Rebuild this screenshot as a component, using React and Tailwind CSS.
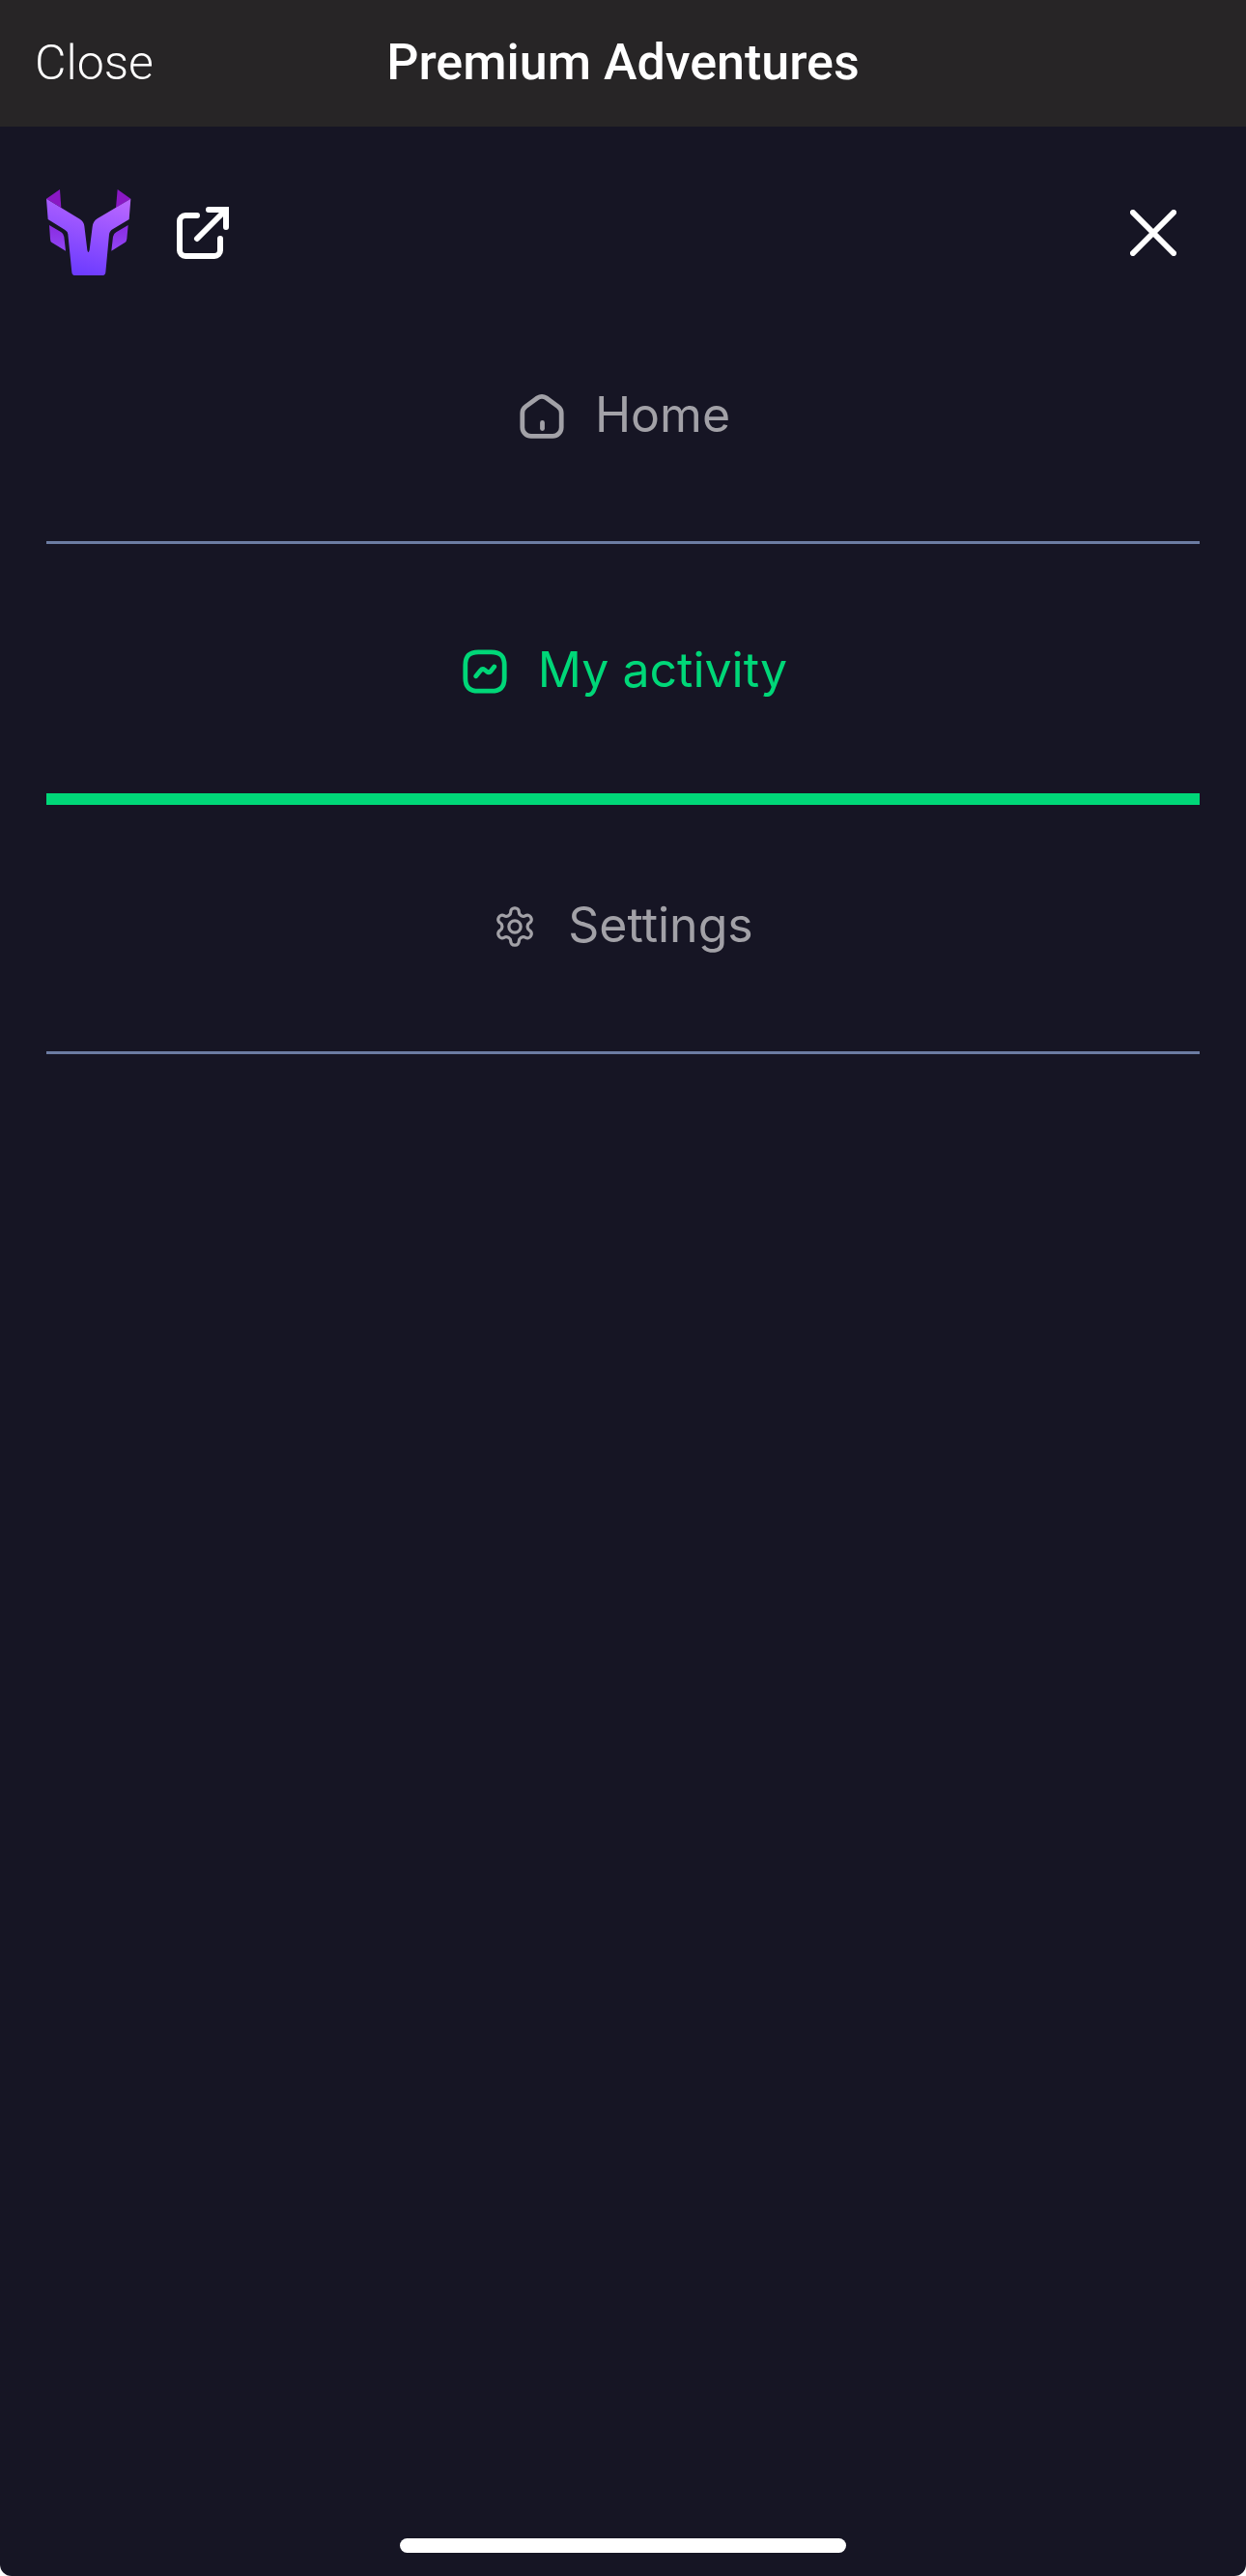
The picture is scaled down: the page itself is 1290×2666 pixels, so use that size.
import React, { useState } from 'react';

function LogoIcon() {
  return (
    <svg viewBox="0 0 264 270" className="w-[88px] h-[90px]" aria-hidden="true">
      <defs>
        <linearGradient id="logo-face" x1="0.7" y1="0" x2="0.4" y2="1">
          <stop offset="0" stopColor="#b765ff" />
          <stop offset="1" stopColor="#6c3bff" />
        </linearGradient>
        <linearGradient id="logo-cheek" x1="0" y1="0" x2="0" y2="1">
          <stop offset="0" stopColor="#8a2be0" />
          <stop offset="1" stopColor="#9146f5" />
        </linearGradient>
      </defs>
      {/* horns */}
      <path d="M0 29 L42 0 L46 57 Z" fill="#8a18c4" />
      <path d="M262 29 L221 0 L216 57 Z" fill="#8a18c4" />
      {/* face */}
      <path
        d="M0 29 L104 92 Q117 100 118 114 L127 188 Q130 202 134 188 L143 116 Q145 99 158 91 L262 29 L257 93 L207 123 Q196 129 195 140 L184 257 Q183 267 173 267 L90 267 Q80 267 79 257 L67 139 Q66 130 57 125 L5 93 Z"
        fill="url(#logo-face)"
      />
      {/* cheeks */}
      <path d="M9 111 L46 133 Q54 138 55 147 L60 191 L17 165 Q12 162 12 154 Z" fill="url(#logo-cheek)" />
      <path d="M254 111 L217 133 Q208 138 207 147 L202 191 L244 165 Q249 162 250 154 Z" fill="url(#logo-cheek)" />
    </svg>
  );
}

function ExternalIcon() {
  return (
    <svg viewBox="0 0 54 54" className="w-[54px] h-[54px]" fill="none" stroke="currentColor" strokeWidth="6" strokeLinecap="round" strokeLinejoin="round" aria-hidden="true">
      <path d="M21 9 H9 A6 6 0 0 0 3 15 V45 A6 6 0 0 0 9 51 H39 A6 6 0 0 0 45 45 V33" />
      <path d="M21 33 L50 4" />
      <path d="M33 3 H51 V21" strokeLinejoin="miter" />
    </svg>
  );
}

function CloseIcon() {
  return (
    <svg viewBox="0 0 50 50" className="w-12 h-12" fill="none" stroke="currentColor" strokeWidth="6" strokeLinecap="round" aria-hidden="true">
      <path d="M3 3 L47 47 M47 3 L3 47" />
    </svg>
  );
}

function HomeIcon() {
  return (
    <svg viewBox="0 0 54 54" className="w-[54px] h-[54px]" fill="none" stroke="currentColor" strokeWidth="4.8" strokeLinecap="round" strokeLinejoin="round" aria-hidden="true">
      <path d="M22.5 7.8 L10.4 16.6 Q6.8 19.3 6.8 23.5 V38.5 A9 9 0 0 0 15.8 47.3 H38.2 A9 9 0 0 0 47.2 38.5 V23.5 Q47.2 19.3 43.6 16.6 L31.5 7.8 Q27 4.9 22.5 7.8 Z" />
      <path d="M27.5 33.5 V39.5" />
    </svg>
  );
}

function ActivityIcon() {
  return (
    <svg viewBox="0 0 54 54" className="w-[54px] h-[54px]" fill="none" stroke="currentColor" strokeWidth="4.8" strokeLinecap="round" strokeLinejoin="round" aria-hidden="true">
      <path d="M20.3 6.8 H33.7 C43 6.8 47.2 11 47.2 20.3 V33.7 C47.2 43 43 47.2 33.7 47.2 H20.3 C11 47.2 6.8 43 6.8 33.7 V20.3 C6.8 11 11 6.8 20.3 6.8 Z" />
      <path d="M17.8 31.8 L22.4 26 Q24.4 23.6 27 25.4 L29 27 Q31.4 28.8 33.4 26.3 L36.7 22" />
    </svg>
  );
}

function SettingsIcon() {
  return (
    <svg viewBox="0 0 24 24" className="w-[46px] h-[46px]" fill="none" stroke="currentColor" strokeWidth="1.7" strokeLinecap="round" strokeLinejoin="round" aria-hidden="true">
      <path d="M12.22 2h-.44a2 2 0 0 0-2 2v.18a2 2 0 0 1-1 1.73l-.43.25a2 2 0 0 1-2 0l-.15-.08a2 2 0 0 0-2.73.73l-.22.38a2 2 0 0 0 .73 2.73l.15.1a2 2 0 0 1 1 1.72v.51a2 2 0 0 1-1 1.74l-.15.09a2 2 0 0 0-.73 2.73l.22.38a2 2 0 0 0 2.73.73l.15-.08a2 2 0 0 1 2 0l.43.25a2 2 0 0 1 1 1.73V20a2 2 0 0 0 2 2h.44a2 2 0 0 0 2-2v-.18a2 2 0 0 1 1-1.73l.43-.25a2 2 0 0 1 2 0l.15.08a2 2 0 0 0 2.73-.73l.22-.39a2 2 0 0 0-.73-2.73l-.15-.08a2 2 0 0 1-1-1.74v-.5a2 2 0 0 1 1-1.74l.15-.09a2 2 0 0 0 .73-2.73l-.22-.38a2 2 0 0 0-2.73-.73l-.15.08a2 2 0 0 1-2 0l-.43-.25a2 2 0 0 1-1-1.73V4a2 2 0 0 0-2-2z" />
      <circle cx="12" cy="12" r="3.2" />
    </svg>
  );
}

const menuItems = [
  { id: 'home', label: 'Home', icon: HomeIcon },
  { id: 'activity', label: 'My activity', icon: ActivityIcon },
  { id: 'settings', label: 'Settings', icon: SettingsIcon },
];

export default function App() {
  const [activeItem, setActiveItem] = useState('activity');

  const handleSelect = (e, id) => {
    e.preventDefault();
    setActiveItem(id);
  };

  return (
    <div className="min-h-screen bg-white">
      <div className="min-h-screen flex flex-col bg-[#161524] rounded-b-xl overflow-hidden">
        {/* Title bar */}
        <header className="grid grid-cols-[1fr_auto_1fr] items-center h-[131px] px-9 pb-0.5 bg-[#272526] text-white font-['Roboto',sans-serif] leading-[72px]">
          <button type="button" className="justify-self-start font-light text-[50px]">Close</button>
          <h1 className="font-medium text-[52px]">Premium Adventures</h1>
        </header>

        {/* Menu header */}
        <div className="flex items-center justify-between px-12 pt-[62px] pb-[10px] text-white">
          <div className="flex items-center gap-[47px]">
            <LogoIcon />
            <a href="#open" aria-label="Open in browser">
              <ExternalIcon />
            </a>
          </div>
          <button type="button" aria-label="Close menu" className="w-24 h-24 flex items-center justify-center">
            <CloseIcon />
          </button>
        </div>

        <nav className="flex-1 px-12 font-['Inter',sans-serif] text-[50px]">
          <ul>
            {menuItems.map(({ id, label, icon: Icon }) => {
              const active = id === activeItem;
              return (
                <li key={id}>
                  <a
                    href={`#${id}`}
                    onClick={(e) => handleSelect(e, id)}
                    aria-current={active ? 'page' : undefined}
                    className={`flex items-center justify-center py-24 ${id === 'settings' ? 'gap-8' : 'gap-7'} ${active ? 'text-[#00d778]' : 'text-[#a2a1a7]'}`}
                  >
                    <Icon />
                    <span className="leading-[68px] pb-1">{label}</span>
                  </a>
                  <div className={active ? 'h-3 -my-[6px] bg-[#00d778]' : 'h-[3px] -mt-[3px] bg-[#6c7ca2]'} />
                </li>
              );
            })}
          </ul>
        </nav>

        {/* Home indicator */}
        <div className="flex justify-center pb-6">
          <div className="w-[462px] h-[15px] rounded-full bg-white" />
        </div>
      </div>
    </div>
  );
}
